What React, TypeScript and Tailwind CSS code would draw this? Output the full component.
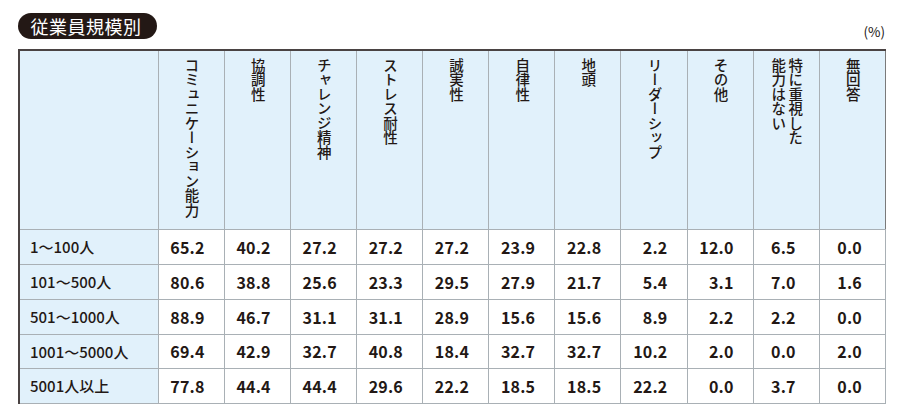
const headers: string[][] = [
  ['コミュニケーション能力'],
  ['協調性'],
  ['チャレンジ精神'],
  ['ストレス耐性'],
  ['誠実性'],
  ['自律性'],
  ['地頭'],
  ['リーダーシップ'],
  ['その他'],
  ['特に重視した', '能力はない'],
  ['無回答'],
];

const rows: { label: string; values: string[] }[] = [
  { label: '1〜100人', values: ['65.2', '40.2', '27.2', '27.2', '27.2', '23.9', '22.8', '2.2', '12.0', '6.5', '0.0'] },
  { label: '101〜500人', values: ['80.6', '38.8', '25.6', '23.3', '29.5', '27.9', '21.7', '5.4', '3.1', '7.0', '1.6'] },
  { label: '501〜1000人', values: ['88.9', '46.7', '31.1', '31.1', '28.9', '15.6', '15.6', '8.9', '2.2', '2.2', '0.0'] },
  { label: '1001〜5000人', values: ['69.4', '42.9', '32.7', '40.8', '18.4', '32.7', '32.7', '10.2', '2.0', '0.0', '2.0'] },
  { label: '5001人以上', values: ['77.8', '44.4', '44.4', '29.6', '22.2', '18.5', '18.5', '22.2', '0.0', '3.7', '0.0'] },
];

const rowHeights = ['h-[35px]', 'h-[35px]', 'h-[35px]', 'h-[34px]', 'h-[35px]'];

export default function App() {
  return (
    <div className="w-[900px] h-[418px] bg-white px-[18px] pt-[13px] text-[#231815] font-['Noto_Sans_CJK_JP',sans-serif]">
      <div className="flex items-end justify-between w-[868px]">
        <div className="w-[139px] h-[26px] rounded-full bg-[#231815] text-white text-[18px] leading-none flex items-center justify-center pr-[3px] tracking-[0.5px]">
          従業員規模別
        </div>
        <div className="text-[13.5px] leading-none pb-[1px] pr-[1px] text-[#231815]">(%)</div>
      </div>

      <table className="mt-[10px] w-[868px] table-fixed border-collapse border-t-2 border-l-2 border-t-[#4a4343] border-l-[#4a4343] border-r-[1.5px] border-b-[1.5px] border-r-[#7a7a7a] border-b-[#7a7a7a]">
        <colgroup>
          <col className="w-[139px]" />
          {headers.map((_, i) => (
            <col key={i} />
          ))}
        </colgroup>
        <thead>
          <tr className="h-[179px] bg-[#e1f1fb]">
            <th className="border-r border-b border-[#a9b0b5]" />
            {headers.map((h, i) => (
              <th key={i} className="border-r border-b border-[#a9b0b5] align-top p-0 last:border-r-0">
                <div className="flex justify-center pt-[7px]">
                  <div className="[writing-mode:vertical-rl] text-[14.5px] font-medium leading-[1.17] text-left">
                    {h.map((line, j) => (
                      <span key={j} className="block">{line}</span>
                    ))}
                  </div>
                </div>
              </th>
            ))}
          </tr>
        </thead>
        <tbody>
          {rows.map((r, ri) => (
            <tr key={ri} className={rowHeights[ri]}>
              <td className="bg-[#e1f1fb] border-r border-b border-[#a9b0b5] pl-[10px] text-[15px] font-medium leading-none">
                {r.label}
              </td>
              {r.values.map((v, vi) => (
                <td
                  key={vi}
                  className={`border-r border-b border-[#a9b0b5] text-right text-[16px] font-bold leading-none tracking-[0.2px] ${vi >= 9 ? 'pr-[23px]' : 'pr-[19px]'}`}
                >
                  {v}
                </td>
              ))}
            </tr>
          ))}
        </tbody>
      </table>
    </div>
  );
}
